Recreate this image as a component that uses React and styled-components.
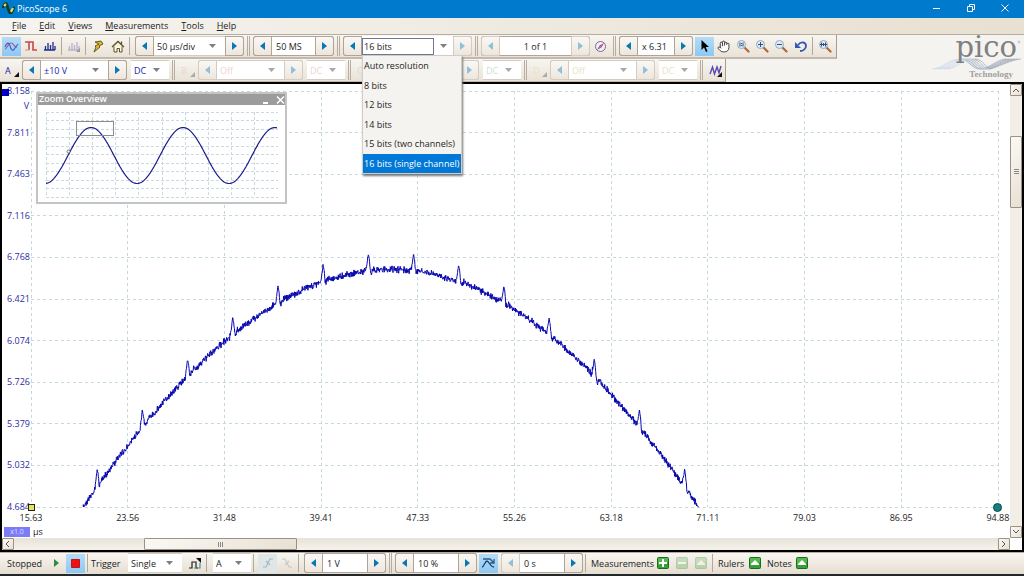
import { useState } from "react";
import styled, { createGlobalStyle, css } from "styled-components";
import { Hand } from "lucide-react";

const RESOLUTIONS = [
  "Auto resolution",
  "8 bits",
  "12 bits",
  "14 bits",
  "15 bits (two channels)",
  "16 bits (single channel)",
];

const Y_TICKS = ["8.158", "7.811", "7.463", "7.116", "6.768", "6.421", "6.074", "5.726", "5.379", "5.032", "4.684"];
const X_TICKS = ["15.63", "23.56", "31.48", "39.41", "47.33", "55.26", "63.18", "71.11", "79.03", "86.95", "94.88"];

const CHANNELS = [
  { id: "A", range: "±10 V", color: "#2222a8" },
  { id: "B", range: "Off", color: "#eed2d2", off: true },
  { id: "C", range: "Off", color: "#cfe0d0", off: true },
  { id: "D", range: "Off", color: "#e6e2c4", off: true },
];

const PLOT_W = 966;
const PLOT_H = 416;

// crest of the sine with a switching spike every 45 units and some noise on top
function buildTrace() {
  let seed = 7;
  const rand = () => {
    seed = (seed * 16807) % 2147483647;
    return seed / 2147483647 - 0.5;
  };
  const spike = [
    [-3, 0], [-2, -3], [-1, -9], [0, -17], [1, -12], [2, -1], [3, 3], [4, 0], [5, -1], [6, -1], [7, 0],
  ];
  const points = [];
  for (let x = 52; x <= 667; x += 0.3) {
    const base = 178.5 + 787 * (1 - Math.cos((x - 359.5) * 0.002595));
    const offset = x - 66 - Math.round((x - 66) / 45.15) * 45.15;
    let extra = 0;
    for (let i = 0; i < spike.length - 1; i++) {
      const [x0, y0] = spike[i];
      const [x1, y1] = spike[i + 1];
      if (offset >= x0 && offset < x1) {
        extra = y0 + ((y1 - y0) * (offset - x0)) / (x1 - x0);
      }
    }
    const noise = extra < -5 ? rand() * 2 : (rand() + rand()) * 4;
    points.push(`${x.toFixed(1)},${Math.min(base + extra + noise, PLOT_H).toFixed(1)}`);
  }
  return points.join(" ");
}

function buildSine() {
  const points = [];
  for (let x = 0; x <= 231; x++) {
    points.push(`${x},${(43.5 + 28 * Math.cos(((x + 1) * 2 * Math.PI) / 92)).toFixed(1)}`);
  }
  return points.join(" ");
}

const TRACE = buildTrace();
const SINE = buildSine();

function GridLines({ width, height }) {
  return Array.from({ length: 11 }, (_, i) => (
    <g key={i}>
      <line x1={(i * width) / 10} x2={(i * width) / 10} y1="0" y2={height} />
      <line y1={(i * height) / 10} y2={(i * height) / 10} x1="0" x2={width} />
    </g>
  ));
}

function Triangle({ dir, color }) {
  const d = { left: "M6 0v8L1 4z", right: "M1 0v8l5-4z", down: "M0 1h7L3.5 5z" }[dir];
  return (
    <svg width="7" height={dir === "down" ? 6 : 8} aria-hidden="true">
      <path d={d} fill={color} />
    </svg>
  );
}

function Spinner({ label, value, width, off, prevOff, nextOff, combo, centered, color, ml }) {
  return (
    <SpinnerBox $ml={ml} $off={off}>
      <StepButton aria-label={`Previous ${label}`} disabled={off || prevOff}>
        <Triangle dir="left" color={off || prevOff ? "#8fc0d8" : "#0a78b4"} />
      </StepButton>
      {combo ? (
        <Select label={label} value={value} width={width} color={color} off={off} />
      ) : (
        <ValueInput aria-label={label} defaultValue={value} $width={width} $centered={centered} disabled={off} />
      )}
      <StepButton aria-label={`Next ${label}`} disabled={off || nextOff}>
        <Triangle dir="right" color={off || nextOff ? "#8fc0d8" : "#0a78b4"} />
      </StepButton>
    </SpinnerBox>
  );
}

function Select({ label, value, width, color, off, ml }) {
  return (
    <SelectBox $width={width} $ml={ml}>
      <NativeSelect aria-label={label} defaultValue={value} disabled={off} $color={color}>
        <option>{value}</option>
      </NativeSelect>
      <Triangle dir="down" color={off ? "#a8a8a8" : "#808080"} />
    </SelectBox>
  );
}

function ResolutionPicker() {
  const [selected, setSelected] = useState(5);
  return (
    <SpinnerBox>
      <StepButton aria-label="Lower resolution" onClick={() => setSelected(Math.max(0, selected - 1))}>
        <Triangle dir="left" color="#0a78b4" />
      </StepButton>
      <Combo>
        <ComboInput aria-label="Resolution" value={RESOLUTIONS[selected].split(" (")[0]} readOnly />
        <ComboArrow aria-label="Show resolutions">
          <Triangle dir="down" color="#808080" />
        </ComboArrow>
        <OptionList role="listbox" aria-label="Resolutions">
          {RESOLUTIONS.map((text, i) => (
            <Option key={text} role="option" aria-selected={i === selected} onClick={() => setSelected(i)}>
              {text}
            </Option>
          ))}
        </OptionList>
      </Combo>
      <StepButton aria-label="Higher resolution" disabled={selected === 5}>
        <Triangle dir="right" color="#8fc0d8" />
      </StepButton>
    </SpinnerBox>
  );
}

function Magnifier({ children }) {
  return (
    <svg width="14" height="14" viewBox="0 0 14 14">
      <path d="M8.5 8.5l4 4" stroke="#b0653c" strokeWidth="2.2" strokeLinecap="round" />
      <circle cx="5.5" cy="5.5" r="4" fill="#dcebf6" stroke="#9aa8bc" />
      <g stroke="#3a4c80" fill="none">{children}</g>
    </svg>
  );
}

function SineIcon() {
  return (
    <svg width="15" height="12" viewBox="0 0 15 12" fill="none">
      <path d="M1 9c2 0 3-6 6-6s3 5 6 4" stroke="#b05a8c" strokeWidth="1.2" />
      <path d="M1 7c2-5 4-5 5-1s3 6 5 2l3-4" stroke="#4a60cc" strokeWidth="1.2" />
    </svg>
  );
}

function BarsIcon({ color, corner }) {
  return (
    <svg width="14" height="12" viewBox="0 0 14 12">
      <path d="M1 10h11M2.5 10V6M5 10V3M7.5 10V5M10 10V2M12 10V6" stroke={color} strokeWidth="1.3" />
      {corner && <path d="M13 8v4H9z" fill="#999" />}
    </svg>
  );
}

function GreenIcon({ kind, faded }) {
  const glyph = {
    plus: "M5 2h2v3h3v2H7v3H5V7H2V5h3z",
    minus: "M2 5h8v2H2z",
    up: "M6 3l4 4v1H2V7z",
  }[kind];
  return (
    <svg width="12" height="12" viewBox="0 0 12 12" opacity={faded ? 0.28 : 1}>
      <rect x="0.5" y="0.5" width="11" height="11" rx="1" fill="#35a035" stroke="#1d6b1d" />
      <path d="M1 1h10v4L1 8z" fill="#7ccb6c" opacity="0.5" />
      <path d={glyph} fill="#fff" />
    </svg>
  );
}

function Logo() {
  return (
    <LogoSvg width="92" height="46" viewBox="0 0 92 46" role="img" aria-label="pico Technology">
      <g fill="none" strokeWidth="0.7">
        {[0, 1, 2, 3, 4, 5].map((i) => (
          <g key={i}>
            <path d={`M${2 + i * 3} 34C${14 + i * 3} 33 ${18 + i * 3} 24 ${30 + i * 2} 24s10 10 20 10`} stroke="#c6d6e6" />
            <path d={`M${30 + i * 3} 24c8 0 12 10 ${20 - i} 10S${68 + i * 3} 24 ${76 + i * 3} 24`} stroke="#98a2b2" />
          </g>
        ))}
      </g>
      <text x="87" y="22" textAnchor="end" fontFamily="DejaVu Serif, serif" fontSize="29" fill="#808080">pico</text>
      <text x="83" y="42" textAnchor="end" fontFamily="Liberation Serif, serif" fontWeight="bold" fontSize="9" fill="#a0a0a0">
        Technology
      </text>
      <circle cx="89" cy="7" r="1" fill="none" stroke="#999" strokeWidth="0.5" />
    </LogoSvg>
  );
}

function TitleBar() {
  return (
    <Title>
      <svg width="13" height="12" viewBox="0 0 13 12">
        <path d="M1 6C2 2 4 0 5 3s2 9 4 8 2-3 3-6" fill="none" stroke="#173a1c" strokeWidth="2.6" />
        <path d="M2 4l2-2M9 10l2-4" stroke="#e9e36a" strokeWidth="2" />
      </svg>
      <AppName>PicoScope 6</AppName>
      <WindowButton aria-label="Minimize">
        <svg width="10" height="10"><path d="M1 5.5h7" stroke="#fff" /></svg>
      </WindowButton>
      <WindowButton aria-label="Restore">
        <svg width="10" height="10"><path d="M1.5 3.5h5v5h-5zM3.5 3V1.5h5v5H7" stroke="#fff" fill="none" /></svg>
      </WindowButton>
      <WindowButton aria-label="Close">
        <svg width="10" height="10"><path d="M1.5 1.5l7 7M8.5 1.5l-7 7" stroke="#fff" /></svg>
      </WindowButton>
    </Title>
  );
}

function CaptureToolbar() {
  return (
    <Toolbar>
      <IconButton aria-label="Scope mode" $active><SineIcon /></IconButton>
      <IconButton aria-label="Persistence mode">
        <svg width="14" height="12" viewBox="0 0 14 12" fill="none">
          <path d="M1 2h4v8M5 2h4v8h4" stroke="#c84848" strokeWidth="1.6" />
          <path d="M1 10h4" stroke="#d89090" />
        </svg>
      </IconButton>
      <IconButton aria-label="Spectrum mode"><BarsIcon color="#1c2c90" /></IconButton>
      <Separator />
      <IconButton aria-label="Spectrum options" disabled><BarsIcon color="#b9b3cc" corner /></IconButton>
      <Separator />
      <IconButton aria-label="Auto setup">
        <svg width="12" height="14" viewBox="0 0 12 14">
          <path d="M3 3l6-1 2 3-4 2 1 1-6 5 2-5-1-1 4-2z" fill="#e8b820" stroke="#4a3a10" strokeWidth="0.8" />
        </svg>
      </IconButton>
      <IconButton aria-label="Home" $ml={1}>
        <svg width="14" height="13" viewBox="0 0 14 13">
          <path d="M3 6.500V12h3V8.500h2.500V12H11V6.500" fill="#fffbe0" stroke="#5a5030" />
          <path d="M1 7l6-5.500L13 7M10.500 4V1.500" fill="none" stroke="#5a5020" strokeWidth="1.3" />
        </svg>
      </IconButton>
      <Separator />
      <Spinner label="timebase" value="50 µs/div" width={71} combo ml={3} />
      <DoubleSeparator />
      <Spinner label="sample count" value="50 MS" width={43} />
      <DoubleSeparator />
      <ResolutionPicker />
      <DoubleSeparator />
      <Spinner label="buffer" value="1 of 1" width={71} prevOff nextOff centered />
      <IconButton aria-label="Buffer navigator" $ml={1}>
        <svg width="13" height="13" viewBox="0 0 13 13">
          <circle cx="6.500" cy="6.500" r="5" fill="#f6eef6" stroke="#7d6a88" />
          <path d="M10 3L7.500 7.500 5.500 5.500z" fill="#c04878" />
          <path d="M3 10l2.500-4.500 2 2z" fill="#6878b8" />
        </svg>
      </IconButton>
      <DoubleSeparator />
      <Spinner label="zoom factor" value="x 6.31" width={36} />
      <IconButton aria-label="Select" $active $ml={2}>
        <svg width="10" height="14" viewBox="0 0 10 14"><path d="M1.500 1v10L4 8.500 6 13l1.500-.8L5.700 8H9z" /></svg>
      </IconButton>
      <IconButton aria-label="Hand tool"><Hand size={13} color="#222" strokeWidth={1.6} fill="#fff" /></IconButton>
      <IconButton aria-label="Zoom 1:1"><Magnifier><path d="M4 3.500v4M7 3.500v4M5.500 4v1M5.500 6v1" /></Magnifier></IconButton>
      <IconButton aria-label="Zoom in"><Magnifier><path d="M3 5.500h5M5.500 3v5" /></Magnifier></IconButton>
      <IconButton aria-label="Zoom out"><Magnifier><path d="M3 5.500h5" /></Magnifier></IconButton>
      <IconButton aria-label="Undo zoom" $ml={1}>
        <svg width="13" height="12" viewBox="0 0 13 12">
          <path d="M4 5c3-4 8-3 8 1 0 3-3 5-6 5" fill="none" stroke="#3458b4" strokeWidth="1.800" />
          <path d="M1 2v6h6z" fill="#3458b4" />
        </svg>
      </IconButton>
      <Separator />
      <IconButton aria-label="Zoom to full"><Magnifier><path d="M2 5.500h7M3.500 3.500v4M5.500 4v3M7.500 3.500v4" /></Magnifier></IconButton>
    </Toolbar>
  );
}

function ChannelToolbar() {
  return (
    <Toolbar>
      {CHANNELS.map(({ id, range, color, off }) => (
        <ChannelGroup key={id}>
          <ChannelButton $color={color} disabled={off}>
            {id}
            <svg width="5" height="5"><path d="M5 0v5H0z" fill={off ? "#aaa" : "#111"} /></svg>
          </ChannelButton>
          <Spinner label={`channel ${id} range`} value={range} width={67} color={color} off={off} combo />
          <Select label={`Channel ${id} coupling`} value="DC" width={38} color={color} off={off} ml={4} />
          <DoubleSeparator />
        </ChannelGroup>
      ))}
      <IconButton aria-label="Math channels">
        <svg width="14" height="13" viewBox="0 0 14 13">
          <path d="M1 10L3.500 3l2 7L8 3l2 6 2-7" fill="none" stroke="#5a48b0" strokeWidth="1.400" />
          <path d="M13 8v5H8z" fill="#111" />
        </svg>
      </IconButton>
    </Toolbar>
  );
}

function ZoomOverview() {
  return (
    <Overview>
      <OverviewTitle>
        Zoom Overview
        <OverviewButtons>
          <PlainButton aria-label="Collapse overview">
            <svg width="8" height="10"><path d="M1 8h5" stroke="#fff" strokeWidth="2" /></svg>
          </PlainButton>
          <PlainButton aria-label="Close overview">
            <svg width="9" height="10"><path d="M1 1.500l7 7M8 1.500l-7 7" stroke="#fff" strokeWidth="1.500" /></svg>
          </PlainButton>
        </OverviewButtons>
      </OverviewTitle>
      <OverviewPlot viewBox="0 0 232 86" preserveAspectRatio="none">
        <g stroke="#c8dae4" strokeDasharray="3 2" shapeRendering="crispEdges">
          <GridLines width={232} height={85} />
        </g>
        <polyline points={SINE} fill="none" stroke="#1c1c90" strokeWidth="1.2" />
        <rect x="30.500" y="9.500" width="37" height="14" fill="none" stroke="#8c8c8c" />
        <circle cx="22.500" cy="39.500" r="1.500" fill="#fff" stroke="#555" strokeWidth="0.8" />
      </OverviewPlot>
    </Overview>
  );
}

function ScopeView() {
  return (
    <View>
      <ViewBody>
        <Canvas>
          <YAxis>
            {Y_TICKS.map((tick) => <YTick key={tick}>{tick}</YTick>)}
            <YUnit>V</YUnit>
            <ChannelHandle />
          </YAxis>
          <PlotArea>
            <Plot viewBox={`0 0 ${PLOT_W} ${PLOT_H}`} preserveAspectRatio="none">
              <g stroke="#c4d8de" strokeDasharray="3 3" shapeRendering="crispEdges">
                <GridLines width={PLOT_W} height={PLOT_H} />
              </g>
              <polyline points={TRACE} fill="none" stroke="#0808b0" strokeWidth="1" />
            </Plot>
            <TriggerMarker />
            <DelayMarker />
          </PlotArea>
          <XAxis>
            {X_TICKS.map((tick) => <XTick key={tick}>{tick}</XTick>)}
          </XAxis>
          <ScaleRow>
            <ScaleChip>x1.0</ScaleChip>
            µs
          </ScaleRow>
          <ZoomOverview />
        </Canvas>
        <VScroll>
          <ScrollButton aria-label="Scroll up">
            <svg width="8" height="6"><path d="M1 5l3-3 3 3" fill="none" stroke="#555" /></svg>
          </ScrollButton>
          <VTrack>
            <VThumb><svg width="5" height="6"><path d="M0 .5h5M0 2.500h5M0 4.500h5" stroke="#888" /></svg></VThumb>
          </VTrack>
          <ScrollButton aria-label="Scroll down">
            <svg width="8" height="6"><path d="M1 1l3 3 3-3" fill="none" stroke="#555" /></svg>
          </ScrollButton>
        </VScroll>
      </ViewBody>
      <HScroll>
        <ScrollButton aria-label="Scroll left">
          <svg width="6" height="8"><path d="M4 1L1 4l3 3" fill="none" stroke="#555" /></svg>
        </ScrollButton>
        <HTrack>
          <HThumb><svg width="6" height="5"><path d="M.5 0v5M2.500 0v5M4.500 0v5" stroke="#888" /></svg></HThumb>
        </HTrack>
        <ScrollButton aria-label="Scroll right">
          <svg width="6" height="8"><path d="M1 1l3 3-3 3" fill="none" stroke="#555" /></svg>
        </ScrollButton>
      </HScroll>
    </View>
  );
}

function TriggerToolbar() {
  return (
    <StatusBar>
      <Label $width={40}>Stopped</Label>
      <IconButton aria-label="Start">
        <svg width="7" height="10"><path d="M1 1l5 4-5 4z" fill="#2f8c3c" /></svg>
      </IconButton>
      <IconButton aria-label="Stop" $active>
        <svg width="9" height="9"><path d="M.5.500h8v8h-8z" fill="#f01010" stroke="#b81818" /></svg>
      </IconButton>
      <Separator />
      <Label $width={38} $pad={1}>Trigger</Label>
      <Select label="Trigger mode" value="Single" width={54} />
      <IconButton aria-label="Advanced triggers" $ml={3}>
        <svg width="14" height="13" viewBox="0 0 14 13">
          <path d="M1 11h3V5h4v6h2" fill="none" stroke="#222" strokeWidth="1.200" />
          <path d="M6 11h6V6" fill="none" stroke="#4a9098" strokeWidth="1.200" />
          <path d="M8 1h5v5z" fill="#111" />
        </svg>
      </IconButton>
      <Separator />
      <Select label="Trigger source" value="A" width={38} ml={4} />
      <Separator />
      <IconButton aria-label="Rising edge" $dim $ml={2}>
        <svg width="12" height="12"><path d="M1 10h3l4-8h3M4 4l4 4" fill="none" stroke="#a4b8c0" strokeWidth="1.200" /></svg>
      </IconButton>
      <IconButton aria-label="Falling edge">
        <svg width="12" height="12"><path d="M1 2h3l4 8h3M4 8l4-4" fill="none" stroke="#c8c8c4" strokeWidth="1.200" /></svg>
      </IconButton>
      <Separator />
      <Spinner label="threshold" value="1 V" width={44} ml={3} />
      <DoubleSeparator />
      <Spinner label="pre-trigger" value="10 %" width={44} />
      <IconButton aria-label="Post-trigger delay" $active $ml={2}>
        <svg width="15" height="13" viewBox="0 0 15 13" fill="none" strokeWidth="1.300">
          <path d="M1 10c2 0 3-6 5-6s3 6 7 6" stroke="#1c4064" />
          <path d="M2 2h7l4 4M13 2v4H9" stroke="#2c5c88" />
        </svg>
      </IconButton>
      <Spinner label="delay" value="0 s" width={44} prevOff ml={3} />
      <Separator />
      <Label $width={65} $pad={3}>Measurements</Label>
      <IconButton aria-label="Add measurement"><GreenIcon kind="plus" /></IconButton>
      <IconButton aria-label="Delete measurement" disabled><GreenIcon kind="minus" faded /></IconButton>
      <IconButton aria-label="Edit measurement" disabled><GreenIcon kind="up" faded /></IconButton>
      <Separator />
      <Label $width={30} $pad={3}>Rulers</Label>
      <IconButton aria-label="Rulers"><GreenIcon kind="up" /></IconButton>
      <Label $width={28} $pad={3}>Notes</Label>
      <IconButton aria-label="Notes"><GreenIcon kind="up" /></IconButton>
    </StatusBar>
  );
}

export default function App() {
  return (
    <Window>
      <GlobalStyle />
      <TitleBar />
      <MenuBar>
        {["File", "Edit", "Views", "Measurements", "Tools", "Help"].map((name) => (
          <MenuButton key={name}><u>{name[0]}</u>{name.slice(1)}</MenuButton>
        ))}
      </MenuBar>
      <Header>
        <Toolbars>
          <CaptureToolbar />
          <ChannelToolbar />
        </Toolbars>
        <Logo />
      </Header>
      <ScopeView />
      <TriggerToolbar />
    </Window>
  );
}

const GlobalStyle = createGlobalStyle`
  * {
    box-sizing: border-box;
  }
  body {
    margin: 0;
    background: #fff;
  }
  body, button, input, select {
    font-family: "Open Sans", "Noto Sans", sans-serif;
    font-size: 9px;
    color: #1c1c1c;
  }
  svg {
    display: block;
    flex: none;
  }
`

const Window = styled.div`
  display: flex;
  flex-direction: column;
  min-height: 100vh;
  background: #f5f3ef;
`

const PlainButton = styled.button`
  display: flex;
  align-items: center;
  justify-content: center;
  padding: 0;
  border: 0;
  background: none;
`

const Title = styled.header`
  display: flex;
  align-items: center;
  height: 18px;
  padding: 0 2px 2px;
  background: #007acc;
`

const AppName = styled.span`
  flex: 1;
  padding-left: 2px;
  color: #fff;
`

const WindowButton = styled(PlainButton)`
  width: 34px;
  height: 16px;
`

const MenuBar = styled.nav`
  display: flex;
  align-items: center;
  gap: 13px;
  height: 17px;
  padding: 0 12px 1px;
  border-bottom: 1px solid #b8aca0;
  background: linear-gradient(90deg, #f6f4f0, #e8e0d0);
`

const MenuButton = styled(PlainButton)`
  display: block;
`

const Header = styled.div`
  display: flex;
  justify-content: space-between;
  height: 47px;
  padding-right: 2px;
`

const LogoSvg = styled.svg`
  overflow: visible;
`

const Toolbars = styled.div`
  display: flex;
  flex-direction: column;
  align-items: flex-start;
`

const Toolbar = styled.div`
  display: flex;
  align-items: center;
  height: 24px;
  padding: 0 2px;
  border-right: 1px solid #a89c90;
  border-bottom: 2px solid #c4b8ae;
  background: linear-gradient(#f8f6f2, #e9e2d6);
  & + & {
    height: 23px;
    padding-right: 0;
    border-bottom-width: 1px;
  }
`

const Separator = styled.i`
  width: 1px;
  height: 18px;
  margin: 0 2px;
  background: #b4a898;
`

const DoubleSeparator = styled.i`
  width: 3px;
  height: 20px;
  margin: 0 3px;
  border: solid #b8aca0;
  border-width: 0 1px;
`

const IconButton = styled(PlainButton)`
  width: 19px;
  height: 19px;
  margin-left: ${({ $ml = 0 }) => $ml}px;
  ${({ $active }) => $active && css`
    background: linear-gradient(#b4dcf8, #8cc8f4);
  `}
  ${({ $dim }) => $dim && css`
    background: #dfe6e8;
  `}
`

const SpinnerBox = styled.div`
  display: flex;
  height: 20px;
  margin-left: ${({ $ml = 0 }) => $ml}px;
  border-radius: 3px;
  box-shadow: inset 0 0 0 1px ${({ $off }) => ($off ? "#d4ccc2" : "#b0a498")};
`

const StepButton = styled(PlainButton)`
  width: 19px;
  border: 1px solid #b0a498;
  border-radius: 3px 0 0 3px;
  background: linear-gradient(#faf8f5, #eee6dc);
  &:last-child {
    border-radius: 0 3px 3px 0;
  }
  &:disabled {
    border-color: #d4ccc2;
  }
`

const ValueInput = styled.input`
  width: ${({ $width }) => $width}px;
  padding: 0 4px;
  border: solid #b0a498;
  border-width: 1px 0;
  background: #fff;
  text-align: ${({ $centered }) => ($centered ? "center" : "left")};
`

const SelectBox = styled.div`
  display: grid;
  grid-template-columns: 1fr 16px;
  align-items: center;
  width: ${({ $width }) => $width}px;
  height: 20px;
  margin-left: ${({ $ml = 0 }) => $ml}px;
  border: solid #d4ccc2;
  border-width: 1px 0;
  background: #fff;
  svg {
    grid-area: 1 / 2;
    pointer-events: none;
  }
`

const NativeSelect = styled.select`
  grid-area: 1 / 1 / 2 / 3;
  width: 100%;
  height: 18px;
  padding: 0 3px;
  border: 0;
  appearance: none;
  background: none;
  color: ${({ $color = "#1c1c1c" }) => $color};
  &:disabled {
    opacity: 1;
  }
`

const Combo = styled.div`
  position: relative;
  display: flex;
  align-items: center;
  width: 91px;
  background: #fff;
`

const ComboInput = styled.input`
  width: 72px;
  height: 17px;
  padding: 0 1px;
  border: 1px solid #707890;
  background: #fff;
`

const ComboArrow = styled(PlainButton)`
  flex: 1;
  height: 17px;
`

const OptionList = styled.ul`
  position: absolute;
  z-index: 2;
  top: 19px;
  left: 0;
  display: grid;
  grid-auto-rows: 1fr;
  width: 100px;
  height: 119px;
  margin: 0;
  padding: 0;
  border: 1px solid #d0ccc6;
  background: #f5f3ef;
  box-shadow: 1px 2px 2px #777;
  list-style: none;
`

const Option = styled.li`
  display: flex;
  align-items: center;
  padding-left: 1px;
  white-space: nowrap;
  &[aria-selected="true"] {
    background: #0078d7;
    color: #fff;
  }
`

const ChannelGroup = styled.div`
  display: flex;
  align-items: center;
`

const ChannelButton = styled(PlainButton)`
  align-items: flex-end;
  justify-content: space-between;
  width: 17px;
  height: 14px;
  margin-right: 3px;
  padding-left: 3px;
  color: ${({ $color }) => $color};
  &:disabled {
    color: ${({ $color }) => $color};
  }
`

const View = styled.main`
  display: flex;
  flex: 1;
  flex-direction: column;
  border: 2px solid #000;
  background: #fff;
`

const ViewBody = styled.div`
  display: flex;
  flex: 1;
`

const Canvas = styled.div`
  position: relative;
  display: grid;
  flex: 1;
  grid-template: 1fr 18px 13px / 29px 1fr;
  min-height: 300px;
  padding: 7px 12px 0 0;
`

const YAxis = styled.div`
  position: relative;
  display: flex;
  flex-direction: column;
  justify-content: space-between;
  padding-right: 1px;
  color: #2c2ca4;
  text-align: right;
`

const YTick = styled.span`
  height: 0;
  line-height: 0;
`

const YUnit = styled.span`
  position: absolute;
  top: 8px;
  right: 2px;
`

const ChannelHandle = styled.i`
  position: absolute;
  top: -2px;
  left: 0;
  width: 7px;
  height: 7px;
  background: #0000c0;
`

const PlotArea = styled.div`
  position: relative;
`

const Plot = styled.svg`
  position: absolute;
  inset: 0;
  width: 100%;
  height: 100%;
  overflow: visible;
  line, polyline {
    vector-effect: non-scaling-stroke;
  }
`

const TriggerMarker = styled.i`
  position: absolute;
  bottom: -4px;
  left: -3px;
  width: 7px;
  height: 7px;
  border: 1px solid #222;
  background: #e8e060;
`

const DelayMarker = styled.i`
  position: absolute;
  right: -4px;
  bottom: -5px;
  width: 9px;
  height: 9px;
  border: 1px solid #0c4848;
  border-radius: 50%;
  background: #108080;
`

const XAxis = styled.div`
  display: flex;
  grid-column: 2;
  align-items: center;
  justify-content: space-between;
  padding-top: 3px;
`

const XTick = styled.span`
  display: flex;
  justify-content: center;
  width: 0;
`

const ScaleRow = styled.div`
  display: flex;
  grid-column: 1 / 3;
  gap: 3px;
  align-items: center;
  padding-left: 2px;
`

const ScaleChip = styled.span`
  width: 26px;
  background: #7c7cf8;
  color: #dcdcff;
  font-size: 7px;
  line-height: 10px;
  text-align: center;
`

const Overview = styled.section`
  position: absolute;
  top: 8px;
  left: 34px;
  width: 251px;
  border: 2px solid #c4c4c4;
  background: #fff;
`

const OverviewTitle = styled.div`
  display: flex;
  justify-content: space-between;
  height: 11px;
  padding-left: 1px;
  background: #9c9c9c;
  color: #fff;
  font-weight: 600;
  line-height: 10px;
`

const OverviewButtons = styled.span`
  display: flex;
  gap: 6px;
`

const OverviewPlot = styled.svg`
  width: calc(100% - 15px);
  height: 86px;
  margin: 7px 7px 4px 8px;
`

const scrollPart = css`
  display: flex;
  align-items: center;
  justify-content: center;
  border: 1px solid #9c9284;
  border-radius: 1px;
  background: linear-gradient(135deg, #fbf9f5, #e8e0d4);
`

const ScrollButton = styled(PlainButton)`
  ${scrollPart}
  width: 12px;
  height: 12px;
`

const VScroll = styled.div`
  display: flex;
  flex-direction: column;
  width: 12px;
  background: #f2eee6;
`

const VTrack = styled.div`
  display: grid;
  flex: 1;
  grid-template-rows: 40fr 72fr 317fr;
`

const VThumb = styled.div`
  ${scrollPart}
  grid-row: 2;
`

const HScroll = styled.div`
  display: flex;
  height: 12px;
  margin-right: 12px;
  background: linear-gradient(#e8e2d8, #f6f3ec);
`

const HTrack = styled.div`
  display: grid;
  flex: 1;
  grid-template-columns: 130fr 153fr 701fr;
`

const HThumb = styled.div`
  ${scrollPart}
  grid-column: 2;
`

const StatusBar = styled.footer`
  display: flex;
  align-items: center;
  height: 24px;
  padding: 0 7px 1px;
  border-top: 1px solid #b8aca0;
  border-bottom: 2px solid #20282c;
  background: linear-gradient(#f8f6f2, #e6ddd0);
`

const Label = styled.span`
  width: ${({ $width }) => $width}px;
  padding-left: ${({ $pad = 0 }) => $pad}px;
`
